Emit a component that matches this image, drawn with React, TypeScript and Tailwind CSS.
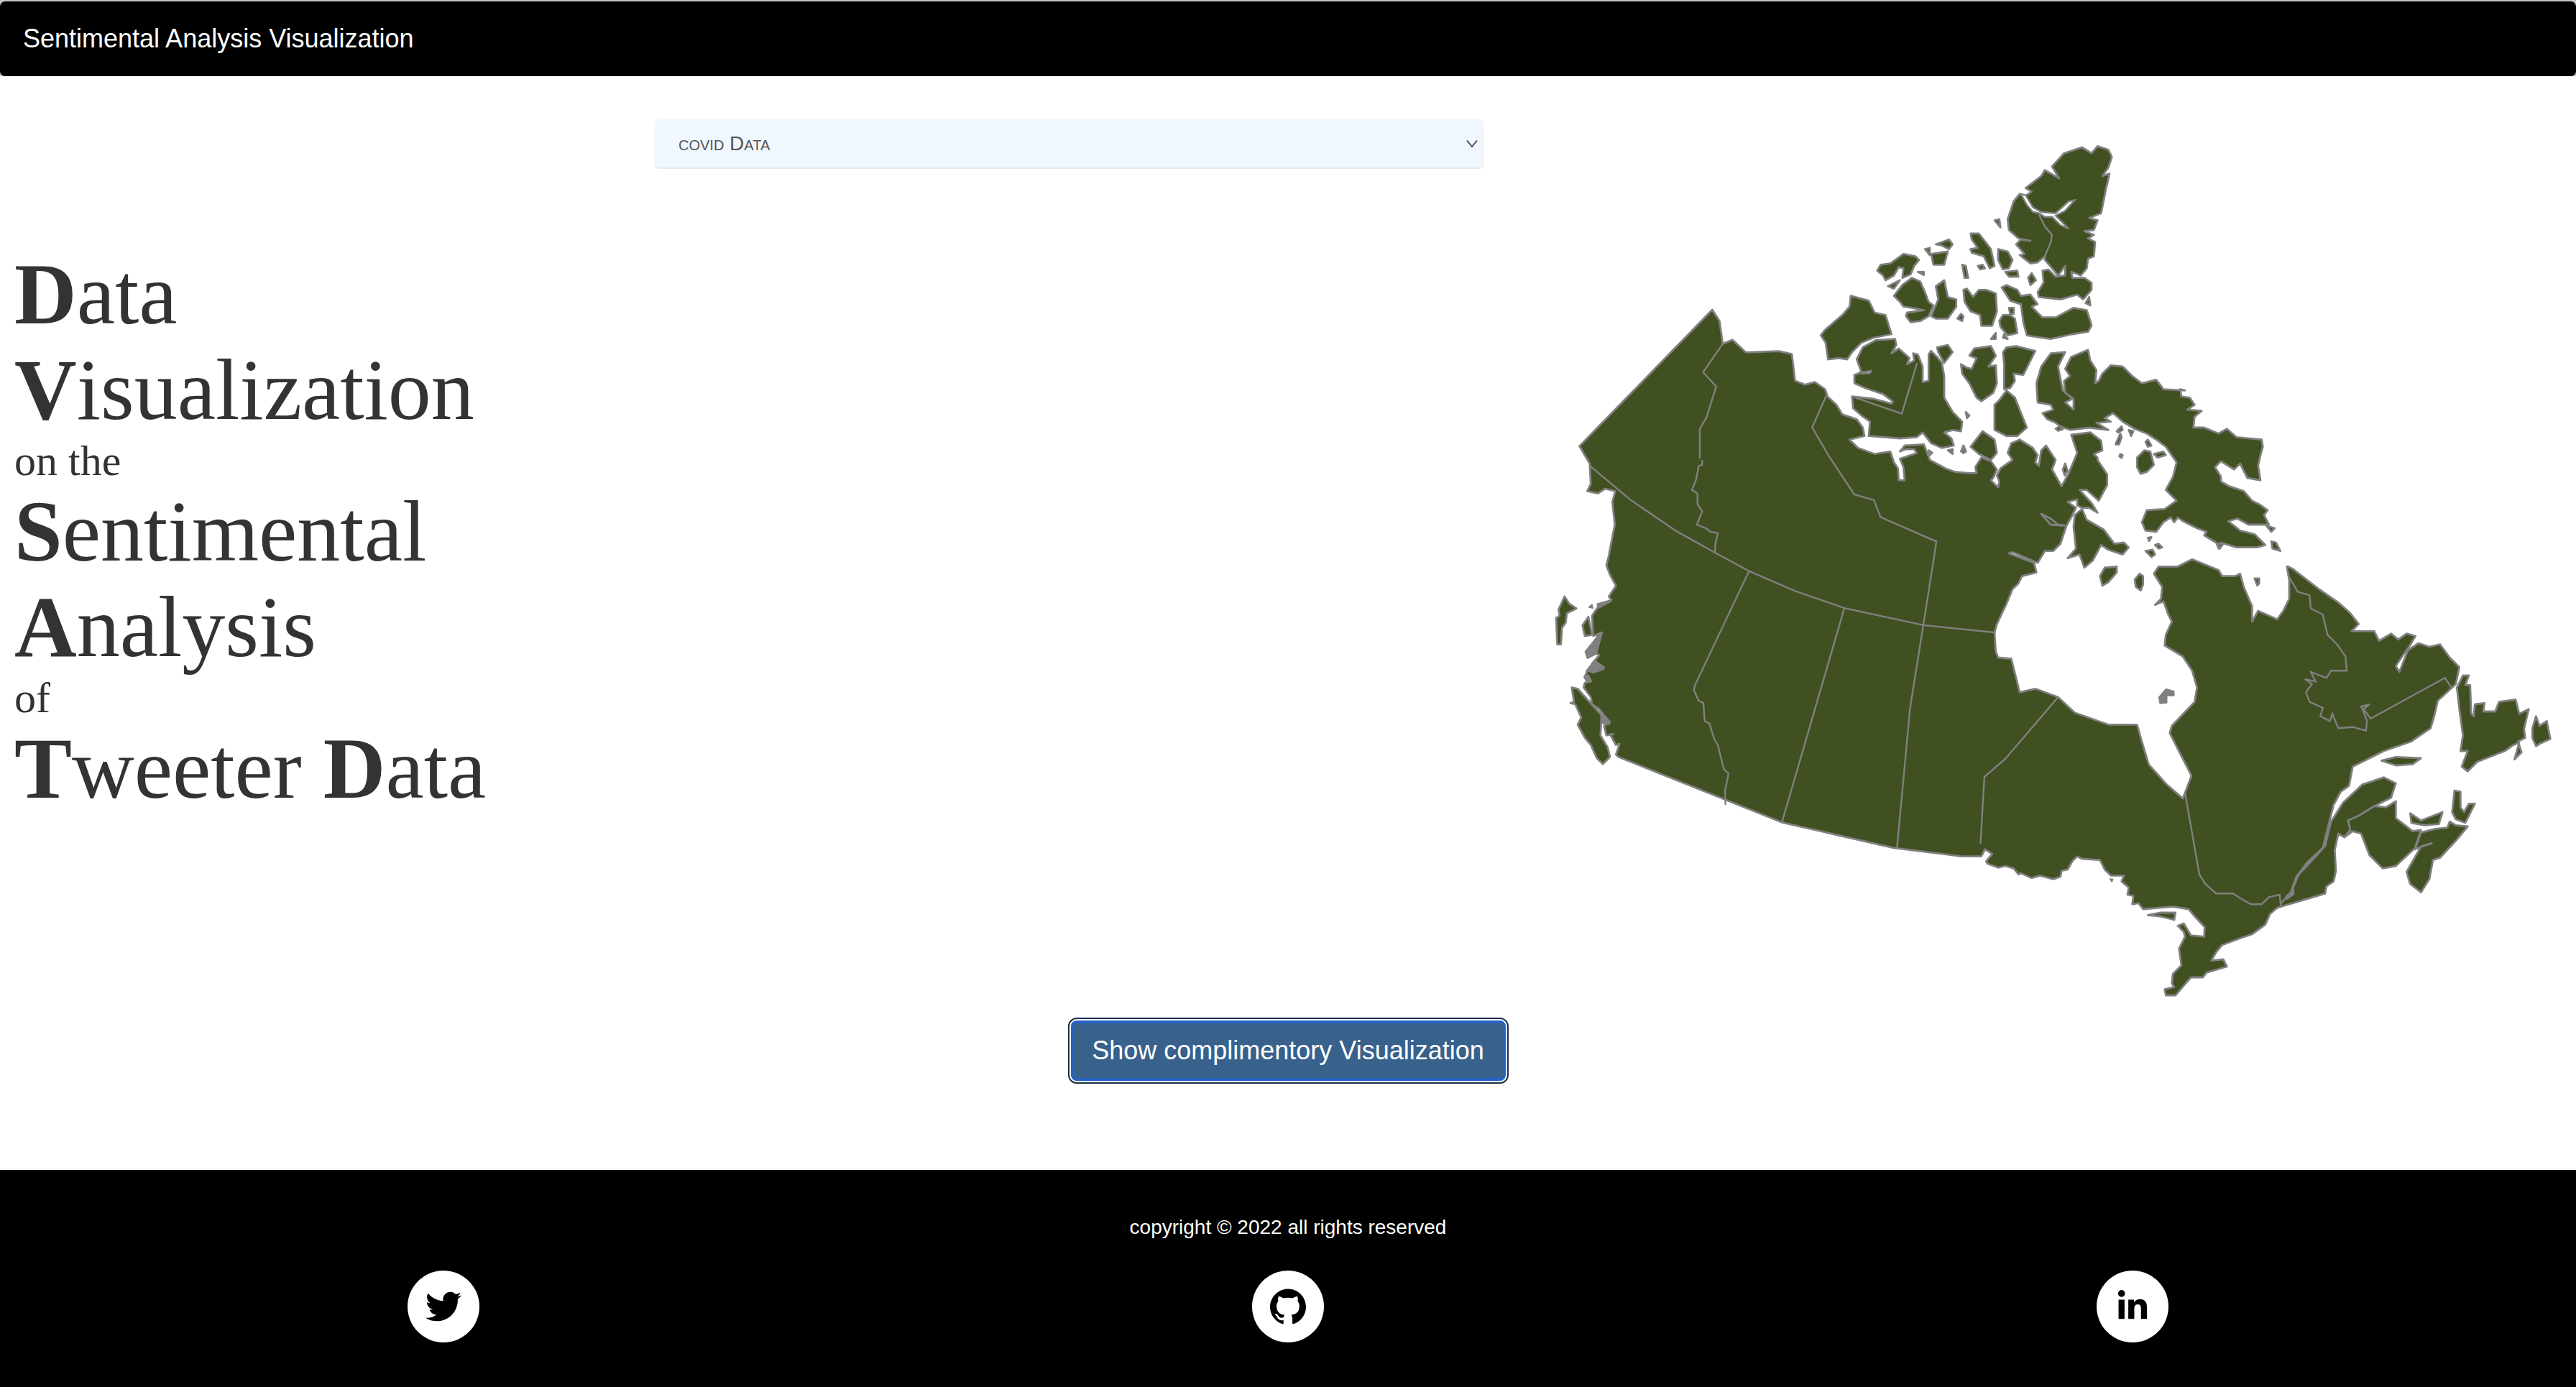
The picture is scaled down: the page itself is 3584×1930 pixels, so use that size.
import { FaTwitter, FaLinkedinIn } from "react-icons/fa";
import { SiGithub } from "react-icons/si";

const conv = (ox: number, oy: number, sx: number, sy: number) => (s: string) =>
  s
    .trim()
    .split(/\s+/)
    .map((p) => {
      const [x, y] = p.split(",").map(Number);
      return `${(ox + x * sx).toFixed(1)},${(oy + y * sy).toFixed(1)}`;
    })
    .join(" ");

const z3 = conv(2150, 170, 1434 / 1568, 1240 / 1568);
const z8 = conv(2520, 190, 1 / 3, 1 / 3);
const z9 = conv(2720, 500, 1 / 3, 1 / 3);
const z10 = conv(3040, 780, 1 / 3, 1 / 3);
const zA = conv(2150, 640, 1 / 3, 1 / 3);
const zB = conv(2730, 1130, 1 / 3, 1 / 3);

const mainland = [
  z3("52,570 254,330 265,350 270,390 285,383 305,405 355,403 375,408 380,455 395,462"),
  z8("15,1025 58,1055 68,1085 105,1120 130,1160 190,1180 215,1215 222,1250 160,1265 195,1300 265,1325 330,1315 345,1360 362,1385 365,1435 390,1435 385,1380 370,1345 440,1322 430,1305 395,1305 370,1315 390,1290 470,1285 495,1350 560,1385 600,1400 660,1405 690,1405 685,1380 710,1340 750,1355 775,1390 760,1425 750,1435 780,1465 785,1440 775,1415 790,1385 840,1350 820,1320 835,1280 870,1265 925,1300 945,1330 935,1360 950,1375 960,1310 980,1290 1020,1350 1005,1390 1045,1460 1075,1405 1100,1345 1110,1320 1085,1245 1165,1235 1210,1270 1215,1310 1180,1325 1195,1340"),
  z9("595,420 635,480 635,525 600,590 550,545 520,545 570,600 595,640 560,620 530,620 510,610 510,585 470,595 505,620 490,650 465,695 400,690 360,645 400,665 430,690 465,695 440,770 410,800 375,800 345,850 240,805 225,810 330,850 340,890 280,905 265,935 240,960 215,1020 175,1105 165,1140 170,1220 180,1245 235,1250 270,1390 335,1375 430,1410 500,1475 640,1525 760,1525 770,1560"),
  z3("905,1080 918,1130 945,1165 970,1190 983,1150 950,1075"),
  z9("905,1530 1000,1430 1010,1370 990,1300 950,1240 875,1195 880,1150 905,1095 890,1065 870,1010 835,1025 860,1000 865,950 830,895 850,865 930,865 990,835 1100,880 1115,905 1170,905 1190,895 1205,950 1240,1030 1240,1095 1265,1050 1345,1085 1370,1050 1395,1000 1395,920 1385,865"),
  z10("430,25 450,35 560,120 640,175 690,220 725,265 695,295 790,295 810,335 860,305 890,330 925,305 962,315 935,360 910,395 880,440 895,465 930,375 975,345 1020,360 1065,350 1105,405 1145,445 1130,515 1110,535 1055,585 1040,650 1025,700 945,755 830,795 700,860 685,940 650,965 620,1020 600,1100 575,1200 510,1260 465,1320 440,1390 400,1430 440,1390 475,1310 545,1235 585,1190 610,1090 660,1010 740,935 830,905 880,930 860,990 790,1025 725,1065 680,1085 690,1125 665,1155 700,1130 735,1140 770,1230 825,1285 880,1275 960,1200 985,1125 950,1130 880,1075 880,1005 840,1030 790,1025 725,1065 680,1085 690,1125 665,1155 640,1140 625,1210 630,1295 620,1340 590,1360 585,1390 400,1445"),
  zB("1315,400 1285,425 1265,470 1210,510 1165,525 1085,555 1060,585 1040,620 1090,615 1105,645 1020,670 1005,690 955,690 920,730 890,765 850,765 845,740 885,730 875,715 880,675 915,640 905,570 930,520 925,500 900,475 925,465 955,515 1010,520 1012,480 970,435 945,405 880,395 755,405 735,380 710,385 715,350 690,345 695,315 665,290 675,265 620,265 595,240 575,200 500,195 480,185 460,205 440,240 415,245 410,270 380,280 325,265 290,275 245,255 235,260 215,235 180,225 150,232 105,215 100,205 125,175 95,155 80,185 0,185"),
  z3("530,1277 360,1232"),
  zA("305,1240 295,1230 310,1185 295,1190 270,1145 285,1145 255,1150 245,1110 270,1095 240,1060 225,1040 195,1020 190,990 160,950 165,930 190,925 165,905 175,880 245,865 195,850 225,815 185,790 215,740 235,720 200,735 195,650 215,620 275,585 265,570 295,525 270,480 255,440 265,400 290,270 280,175 292,130 250,120 220,140 175,130 190,100 185,15"),
].join(" ");

const baffin = [
  z8("940,1030 960,960 1000,905 1060,900 1030,960 1050,1060 1090,1095 1060,1110 1095,1140 1095,1095 1060,1070 1055,1020 1080,1000 1060,970 1085,920 1155,890 1165,935 1190,975 1185,1030 1200,1020 1215,990 1250,955 1300,960 1340,1000 1380,1030 1440,1015 1470,1055"),
  z9("960,130 940,125 945,155 980,160 1000,190 970,210 1030,215 1000,240 995,285 1040,285 1100,310 1135,290 1175,325 1280,335 1285,365 1275,400 1265,445 1275,505 1220,495 1190,435 1165,460 1110,425 1085,450 1110,490 1110,510 1145,530 1205,550 1240,590 1270,605 1305,630 1290,650 1310,690 1225,690 1180,665 1140,675 1190,715 1250,730 1295,775 1260,785 1175,785 1110,765 1100,790 1090,765 1040,735 1050,720 1010,705 950,675 930,660 915,680 900,660 870,680 840,720 795,715 780,680 800,630 875,625 925,590 880,545 910,490 925,430 880,365 840,335 800,310 750,290 700,260 660,225 625,245 650,260 590,265 640,295 560,285 480,295 440,280 420,265 385,250 365,225 410,210 400,190 345,180"),
].join(" ");

const z8Islands = [
  "275,560 290,535 330,530 385,490 435,500 450,515 430,540 415,575 380,590 385,550 365,545 345,580 310,600 300,580",
  "320,625 370,600 345,635",
  "445,565 470,565 470,578",
  "345,665 380,620 420,590 455,605 475,650 490,690 510,705 490,750 455,770 415,775 395,750 400,735 470,725 420,715 385,710 370,690",
  "500,750 530,680 520,625 555,600 570,670 605,680 605,710 570,760 520,760",
  "475,470 495,465 495,495",
  "500,490 570,480 555,535 510,535",
  "520,450 575,430 590,450 575,470 545,455",
  "610,760 625,740 635,750 630,770",
  "635,640 650,635 675,670 700,640 730,640 770,655 775,730 755,790 710,790 705,745 665,730 640,690",
  "665,405 700,405 750,470 765,540 745,550 720,500 670,485 665,470 695,465 670,430",
  "630,535 645,540 655,590 640,590",
  "695,540 715,535 725,550 705,555",
  "780,470 820,480 840,515 825,550 800,555 780,515",
  "810,565 860,560 865,585 825,585",
  "905,590 920,570 938,600 915,620",
  "765,350 785,345 790,380",
  "895,215 960,165 975,140 1035,175 1005,125 1055,70 1130,45 1170,70 1195,40 1240,55 1255,85 1240,130 1215,165 1245,155 1230,220 1210,320 1160,340 1195,350 1180,390 1140,395 1180,410 1155,425 1185,440 1180,500 1155,510 1150,550 1125,580 1085,565 1090,590 1140,590 1170,610 1170,640 1135,680 1110,660 1040,680 950,670 945,650 970,610 965,560 990,555 1020,585 1060,580 1060,540 1030,580 1005,550 975,515 975,500 945,525 915,530 870,495 890,490 855,450 875,430 915,435 865,425 825,390 820,345 845,270 870,240 890,250 920,230",
  "795,630 815,620 860,640 875,665 915,660 945,700 920,710 965,755 1020,755 1095,715 1150,725 1165,770 1170,790 1155,815 1090,825 1000,845 930,835 900,830 885,775 875,700 830,685",
  "825,715 845,715 845,740 830,740",
  "785,770 800,745 830,745 850,760 860,820 820,830 790,795",
  "1160,670 1165,705 1145,695",
  "770,820 770,845 750,845",
  "805,825 820,845 800,840",
  "40,830 55,810 100,770 130,745 160,710 165,665 240,685 265,735 310,745 335,825 260,840 210,860 170,900 150,930 115,925 70,930 60,860",
  "180,995 210,985 190,930 215,880 270,850 350,845 355,870 335,905 365,885 410,925 400,950 430,935 425,905 445,910 465,960 465,1025 490,1020 490,910 500,895 525,920 545,945 555,1000 555,1090 590,1150 630,1190 625,1230 590,1225 555,1235 585,1260 595,1290 545,1300 500,1280 465,1235 440,1255 370,1260 240,1250 245,1190 210,1165 175,1135 170,1085 260,1095 335,1115 340,1105 300,1075 225,1050 180,1030",
  "525,880 570,870 590,900 555,945 530,900",
  "625,950 650,965 670,970 690,925 660,915 680,885 750,875 770,915 740,960 770,955 775,1030 760,1070 710,1105 690,1090 660,1030 630,990",
  "800,900 815,880 855,875 935,895 885,995 845,990 850,1020 830,1050 805,1055 805,950",
  "765,1120 785,1100 815,1060 850,1090 880,1165 900,1215 860,1250 815,1250 765,1225",
  "645,1150 660,1165 650,1175",
  "665,1295 715,1230 765,1265 775,1320 750,1350 700,1325",
  "625,1315 635,1290 645,1315",
  "570,1310 590,1305 590,1325",
  "490,1310 505,1320 495,1330",
];

const z9Islands = [
  "500,650 530,625 550,670 620,710 665,770 705,765 725,785 700,815 640,795 610,775 575,840 540,870 520,815 470,830 505,790 495,700",
  "675,300 695,280 700,295 680,305",
  "670,355 690,310 695,325 685,355",
  "725,295 745,300 735,320",
  "795,345 805,335 820,360 805,365",
  "830,395 870,385 880,400 845,410",
  "760,410 790,380 815,385 830,440 800,470 775,478 760,450",
  "690,395 700,400 695,412 686,405",
  "450,460 460,435 470,465 458,485",
  "605,905 625,870 675,865 675,890 640,930 615,945",
  "750,920 770,895 785,905 785,940 775,965 755,950",
  "795,800 825,795 835,815 820,825",
  "835,775 850,770 865,785 850,790",
  "805,745 820,742 810,758",
  "1095,770 1120,770 1105,790",
  "1250,915 1270,915 1270,935 1262,945",
  "1320,760 1340,765 1358,800 1325,790",
  "1300,695 1335,705 1320,720",
  "30,385 38,365 45,385 35,392",
  "420,290 435,280 450,292 430,298",
];

const z10Islands = [
  "1135,530 1160,480 1185,480 1170,520 1190,520 1195,640 1205,650 1210,600 1250,595 1245,630 1295,630 1310,590 1380,580 1395,640 1435,620 1425,660 1415,705 1420,740 1390,755 1405,800 1375,830 1395,760 1370,770 1335,795 1220,840 1180,880 1155,860 1180,795 1150,795 1160,730 1145,620",
  "1450,700 1465,650 1480,690 1510,670 1525,745 1480,765 1465,775 1450,740",
  "820,835 880,820 985,825 950,850 880,855",
  "940,1055 985,1085 1075,1050 1060,1100 1000,1105 945,1095",
  "985,1135 1045,1120 1095,1115 1105,1090 1130,1105 1180,1110 1130,1170 1065,1240 1035,1250 1020,1330 985,1385 940,1350 925,1300 985,1195 1030,1180 995,1190 960,1205",
  "1125,960 1150,965 1150,1030 1165,1050 1185,1015 1210,1015 1170,1095 1130,1080 1115,1050",
];

const zAIslands = [
  "55,625 80,570 100,600 130,620 90,640 85,680 70,700 65,770 50,770 45,660 60,650",
  "110,950 135,955 175,1000 235,1065 230,1150 260,1200 270,1240 240,1270 215,1245 190,1190 165,1160 135,1105 150,1075 125,1020 105,1015 120,1010",
  "155,690 180,655 195,730 165,735",
];

const zBIslands = ["775,430 825,420 890,420 885,450 825,435"];

const grayShapes = [
  ...["850,1410 880,1375 915,1385 915,1405 885,1405 885,1435 855,1438"].map(z9),
  ...["615,278 630,280 625,293", "1350,350 1385,320 1385,345 1355,365"].map(zB),
  ...[
    "165,800 205,750 240,718 235,735 215,810 175,830",
    "170,880 205,835 245,862 245,875 200,890",
    "160,905 180,895 195,925 170,925",
    "180,615 195,602 200,620",
    "230,1060 265,1090 270,1105 235,1100",
    "215,600 280,582 275,592 220,620",
  ].map(zA),
];

const whiteZ8 = [
  "875,240 895,245 925,295 960,315 1020,320 1075,270 1100,265 1060,310 1020,330 1060,370 1075,385 1040,370 1005,335 975,335 950,320 925,315 900,285",
  "205,985 250,978 245,988 215,990",
];

const borders = [
  z3("270,390 240,440 260,465 245,520 235,540 235,592"),
  zA("655,0 655,20 640,25 630,80 612,125 635,140 635,185 655,215 632,270 670,285 690,300 720,305 710,350 708,385"),
  z3("68,605 130,665 200,720 262,760 310,790 380,825 455,855 575,885 685,898"),
  z3("428,480 406,537 430,585 470,655 500,665 510,695 595,738 575,885 555,1030 535,1277"),
  zA("850,465 625,940 620,960 640,1005 660,1015 665,1090 685,1100 705,1165 720,1190 745,1290 765,1310 750,1380 752,1440"),
  z3("455,855 360,1232"),
  z3("780,1012 700,1120 668,1152 662,1270"),
  z8("185,1090 378,1157 442,945"),
  z8("950,325 975,375 1005,410 1000,440 975,500"),
  z10("0,970 60,1310 85,1350 130,1390 200,1390 240,1415 275,1435 320,1435 350,1405 395,1395 400,1440"),
  z10("430,60 470,130 520,145 525,200 575,225 595,310 635,350 670,400 675,460 610,460 590,490 525,465 545,505 500,495 530,515 505,550 520,590 575,615 565,650 605,670 615,640 640,700 700,695 755,710 760,670 745,630 735,610 770,600 745,620 775,660 1085,490 1115,535"),
];

function CanadaMap() {
  const land = [
    mainland,
    baffin,
    ...z8Islands.map(z8),
    ...z9Islands.map(z9),
    ...z10Islands.map(z10),
    ...zAIslands.map(zA),
    ...zBIslands.map(zB),
  ];
  return (
    <svg width="1434" height="1240" viewBox="2150 170 1434 1240" className="block shrink-0">
      <g fill="#405020" stroke="#808080" strokeWidth="2.8" strokeLinejoin="round">
        {land.map((p, i) => (
          <polygon key={i} points={p} />
        ))}
      </g>
      <g fill="#808080" stroke="#808080" strokeWidth="1">
        {grayShapes.map((p, i) => (
          <polygon key={i} points={p} />
        ))}
      </g>
      <g fill="#ffffff" stroke="#808080" strokeWidth="2.4">
        {whiteZ8.map(z8).map((p, i) => (
          <polygon key={i} points={p} />
        ))}
      </g>
      <g fill="none" stroke="#808080" strokeWidth="2.4">
        {borders.map((p, i) => (
          <polyline key={i} points={p} />
        ))}
      </g>
    </svg>
  );
}

const B = ({ children }: { children: string }) => <strong className="font-bold">{children}</strong>;

function Title() {
  const big = "block text-[120px] leading-[132.5px]";
  const small = "block text-[60px] leading-[65px]";
  return (
    <h1 className="font-['Liberation_Serif',serif] font-normal text-[#333333] whitespace-nowrap">
      <span className={big}><B>D</B>ata</span>
      <span className={big}><B>V</B>isualization</span>
      <span className={small}>on the</span>
      <span className={big}><B>S</B>entimental</span>
      <span className={big}><B>A</B>nalysis</span>
      <span className={small}>of</span>
      <span className={big}><B>T</B>weeter <B>D</B>ata</span>
    </h1>
  );
}

export default function App() {
  return (
    <div className="w-[3584px] h-[1930px] bg-white flex flex-col overflow-hidden font-['Liberation_Sans',Arial,sans-serif]">
      <div className="pt-[2px] bg-[#c4c4c4] shrink-0">
        <header className="h-[104px] bg-black rounded-[7px] flex items-center pl-[32px] text-white text-[36px]">
          Sentimental Analysis Visualization
        </header>
      </div>

      <main className="flex h-[1522px] shrink-0 flex-col">
        <div className="flex h-[1304px] shrink-0">
          <div className="w-[910px] shrink-0 pl-[20px] pt-[238px]">
            <Title />
          </div>
          <div className="w-[1155px] shrink-0 pt-[60px]">
            <div className="relative w-full">
              <select className="w-full h-[69px] appearance-none rounded-[7px] bg-[#f0f7ff] border-b-2 border-[#eaeaea] pl-[34px] text-[28px] text-[#555555] [font-variant:small-caps] outline-none">
                <option>covid Data</option>
              </select>
              <svg width="18" height="12" viewBox="0 0 18 12" className="absolute right-[8px] top-[28px]" fill="none" stroke="#444444" strokeWidth="1.8">
                <path d="M2 1.5 L9 10 L16 1.5" />
              </svg>
            </div>
          </div>
          <div className="pl-[85px] pt-[64px]">
            <CanadaMap />
          </div>
        </div>
        <div className="flex justify-center pt-[6px]">
          <div className="rounded-[12px] border-2 border-[#1c2f45] bg-white p-[2px]">
            <button className="h-[84px] w-[605px] rounded-[8px] border-4 border-[#2563c9] bg-[#38618c] text-[36px] text-white">
              Show complimentory Visualization
            </button>
          </div>
        </div>
      </main>

      <footer className="flex-1 bg-black flex flex-col items-center text-white">
        <p className="text-[28px] leading-[40px] mt-[60px]">copyright © 2022 all rights reserved</p>
        <div className="mt-[40px] w-full px-[567px] flex justify-between">
          <a className="w-[100px] h-[100px] rounded-full bg-white flex items-center justify-center text-black">
            <FaTwitter size={50} />
          </a>
          <a className="w-[100px] h-[100px] rounded-full bg-white flex items-center justify-center text-black">
            <SiGithub size={50} />
          </a>
          <a className="w-[100px] h-[100px] rounded-full bg-white flex items-center justify-center text-black">
            <FaLinkedinIn size={46} />
          </a>
        </div>
      </footer>
    </div>
  );
}
